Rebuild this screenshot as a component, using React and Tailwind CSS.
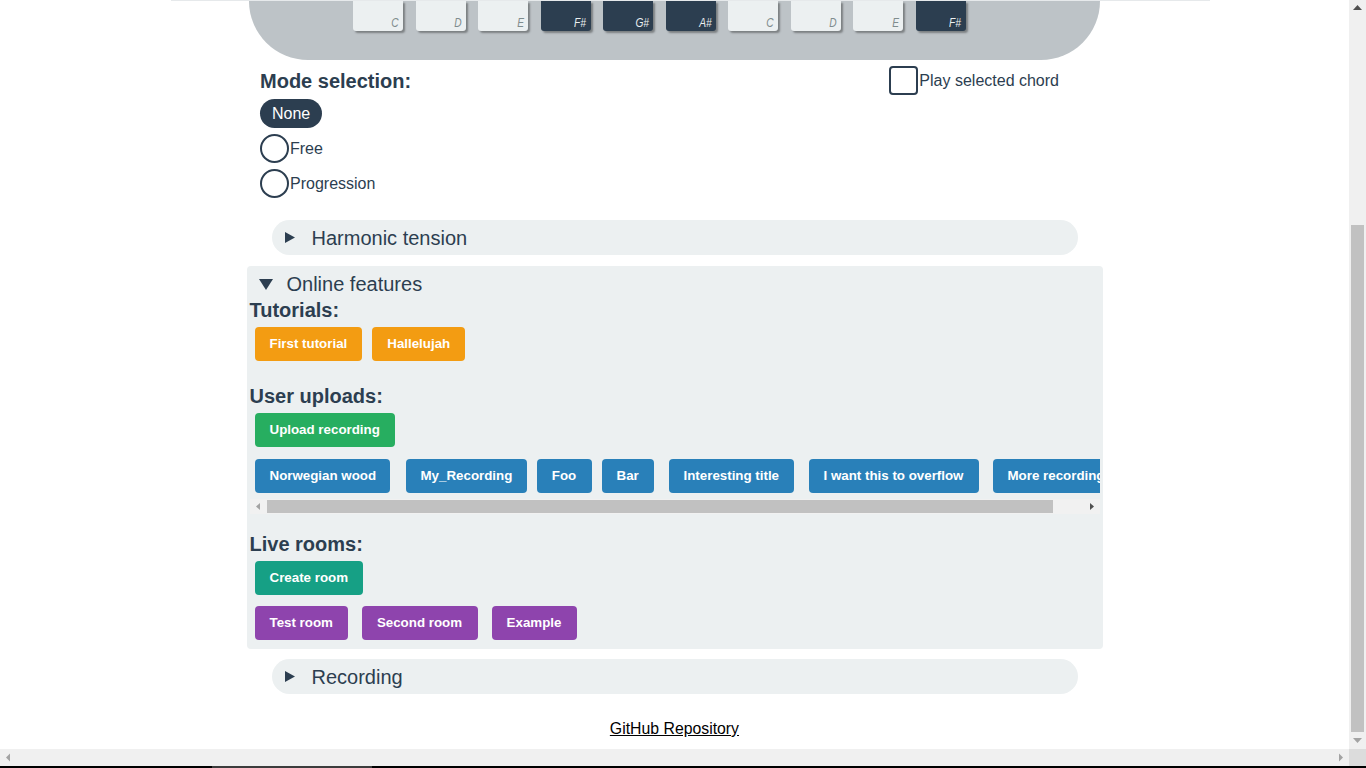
import React from 'react';

const keys = [
  { note: 'C', dark: false },
  { note: 'D', dark: false },
  { note: 'E', dark: false },
  { note: 'F#', dark: true },
  { note: 'G#', dark: true },
  { note: 'A#', dark: true },
  { note: 'C', dark: false },
  { note: 'D', dark: false },
  { note: 'E', dark: false },
  { note: 'F#', dark: true },
];

const uploads = [
  { label: 'Norwegian wood', cls: 'ml-[5px] w-[135px]' },
  { label: 'My_Recording', cls: 'ml-[16px] w-[121px]' },
  { label: 'Foo', cls: 'ml-[10px] w-[55px]' },
  { label: 'Bar', cls: 'ml-[10px] w-[52px]' },
  { label: 'Interesting title', cls: 'ml-[15px] w-[125px]' },
  { label: 'I want this to overflow', cls: 'ml-[15px] w-[170px]' },
  { label: 'More recordings', cls: 'ml-[14px] w-[122px]' },
];

const rooms = [
  { label: 'Test room', cls: 'ml-[5px] w-[93px]' },
  { label: 'Second room', cls: 'ml-[14px] w-[116px]' },
  { label: 'Example', cls: 'ml-[14px] w-[85px]' },
];

const Btn = ({ children, className }) => (
  <button className={`h-[34px] shrink-0 rounded-[4px] px-[15px] text-[13.333px] font-bold whitespace-nowrap text-white ${className}`}>
    {children}
  </button>
);

const Right = () => (
  <svg width="10" height="11" viewBox="0 0 10 11" className="shrink-0">
    <polygon points="0,0 10,5.5 0,11" fill="#2c3e50" />
  </svg>
);

const Down = () => (
  <svg width="14" height="11" viewBox="0 0 14 11" className="shrink-0">
    <polygon points="0,0 14,0 7,11" fill="#2c3e50" />
  </svg>
);

const Summary = ({ label }) => (
  <div className="mx-auto flex h-[35px] w-[806px] items-center rounded-full bg-[#ecf0f1] pl-[13px]">
    <Right />
    <span className="ml-[17px] text-[20px] text-[#2c3e50]">{label}</span>
  </div>
);

const Heading = ({ children, className }) => (
  <h3 className={`ml-[3px] text-[20px] leading-[24px] font-bold text-[#2c3e50] ${className}`}>{children}</h3>
);

export default function App() {
  return (
    <div className="flex h-[768px] w-[1366px] flex-col overflow-hidden bg-white font-['Liberation_Sans',Arial,sans-serif]">
      <div className="flex h-[749px]">
        <div className="flex w-[1349px] flex-col overflow-hidden">
          <div className="ml-[171px] h-px w-[1039px] shrink-0 bg-[#e6e9eb]" />

          {/* piano */}
          <div className="mx-auto h-[59px] w-[851px] shrink-0 rounded-b-[60px] bg-[#bdc3c7] pl-[104px]">
            <div className="flex gap-[12.5px]">
              {keys.map((k, i) => (
                <div
                  key={i}
                  className={`flex h-[30px] w-[50px] items-end justify-end rounded-b-[3px] pr-[4px] pb-[2px] shadow-[2px_2px_2px_rgba(0,0,0,0.35)] ${k.dark ? 'bg-[#2c3e50] text-[#ecf0f1]' : 'bg-[#ecf0f1] text-[#7f8c8d]'}`}
                >
                  <span className="inline-block origin-right scale-x-[0.85] text-[12px] leading-[12px] italic">{k.note}</span>
                </div>
              ))}
            </div>
          </div>

          {/* mode selection */}
          <div className="mx-auto flex w-[851px] shrink-0 items-start justify-between pr-[41px] pl-[11px] text-[#2c3e50]">
            <div className="flex flex-col items-start pt-[9px]">
              <h3 className="text-[20px] leading-[24px] font-bold">Mode selection:</h3>
              <div className="mt-[6px] flex flex-col items-start gap-[6px]">
                <span className="flex h-[29px] items-center rounded-full bg-[#2c3e50] px-[12px] text-[16px] text-white">None</span>
                <label className="flex h-[29px] items-center text-[16px]">
                  <span className="h-[29px] w-[29px] rounded-full border-2 border-[#2c3e50]" />
                  <span className="ml-px">Free</span>
                </label>
                <label className="flex h-[29px] items-center text-[16px]">
                  <span className="h-[29px] w-[29px] rounded-full border-2 border-[#2c3e50]" />
                  <span className="ml-px">Progression</span>
                </label>
              </div>
            </div>
            <label className="mt-[6px] flex h-[29px] items-center text-[16px]">
              <span className="h-[29px] w-[29px] rounded-[4px] border-[2.5px] border-[#2c3e50]" />
              <span className="ml-px">Play selected chord</span>
            </label>
          </div>

          <div className="mt-[22px] shrink-0">
            <Summary label="Harmonic tension" />
          </div>

          {/* online features */}
          <div className="mx-auto mt-[11px] w-[856px] shrink-0 rounded-[4px] bg-[#ecf0f1] pb-[9px]">
            <div className="mt-[6px] flex h-[24px] items-center pl-[12px]">
              <Down />
              <span className="ml-[14px] text-[20px] text-[#2c3e50]">Online features</span>
            </div>

            <Heading className="mt-[2px]">Tutorials:</Heading>
            <div className="mt-[5px] flex">
              <Btn className="ml-[8px] bg-[#f39c12]">First tutorial</Btn>
              <Btn className="ml-[10px] bg-[#f39c12]">Hallelujah</Btn>
            </div>

            <Heading className="mt-[23px]">User uploads:</Heading>
            <div className="mt-[5px] flex">
              <Btn className="ml-[8px] bg-[#27ae60]">Upload recording</Btn>
            </div>

            <div className="mt-[12px] ml-[3px] w-[850px]">
              <div className="flex overflow-hidden">
                {uploads.map((u) => (
                  <Btn key={u.label} className={`bg-[#2980b9] ${u.cls}`}>{u.label}</Btn>
                ))}
              </div>
              <div className="mt-[6px] flex h-[15px] items-center bg-[#f1f1f1]">
                <svg width="17" height="15" viewBox="0 0 17 15" className="shrink-0">
                  <polygon points="6,7.5 10,4 10,11" fill="#a3a3a3" />
                </svg>
                <div className="h-[13px] w-[786px] bg-[#c1c1c1]" />
                <div className="flex-1" />
                <svg width="17" height="15" viewBox="0 0 17 15" className="shrink-0">
                  <polygon points="11,7.5 7,4 7,11" fill="#505050" />
                </svg>
              </div>
            </div>

            <Heading className="mt-[18px]">Live rooms:</Heading>
            <div className="mt-[5px] flex">
              <Btn className="ml-[8px] bg-[#16a085]">Create room</Btn>
            </div>
            <div className="mt-[11px] ml-[3px] flex">
              {rooms.map((r) => (
                <Btn key={r.label} className={`bg-[#8e44ad] ${r.cls}`}>{r.label}</Btn>
              ))}
            </div>
          </div>

          <div className="mt-[10px] shrink-0">
            <Summary label="Recording" />
          </div>

          <div className="mt-[26px] flex shrink-0 justify-center">
            <a href="#" className="inline-block scale-x-[0.93] text-[17px] leading-[18px] text-black underline">
              GitHub Repository
            </a>
          </div>
        </div>

        {/* page vertical scrollbar */}
        <div className="flex w-[17px] flex-col bg-[#f0f0f0]">
          <svg width="17" height="17" viewBox="0 0 17 17" className="shrink-0">
            <polygon points="8.5,5 13,10 4,10" fill="#505050" />
          </svg>
          <div className="h-[208px]" />
          <div className="mx-auto h-[508px] w-[13px] bg-[#c1c1c1]" />
          <div className="flex-1" />
          <svg width="17" height="17" viewBox="0 0 17 17" className="shrink-0">
            <polygon points="8.5,11 13,6 4,6" fill="#a3a3a3" />
          </svg>
        </div>
      </div>

      {/* page horizontal scrollbar */}
      <div className="flex h-[17px] shrink-0">
        <div className="flex w-[1349px] items-center justify-between bg-[#f0f0f0]">
          <svg width="17" height="17" viewBox="0 0 17 17">
            <polygon points="6,8.5 10,4.5 10,12.5" fill="#a3a3a3" />
          </svg>
          <svg width="17" height="17" viewBox="0 0 17 17">
            <polygon points="11,8.5 7,4.5 7,12.5" fill="#a3a3a3" />
          </svg>
        </div>
        <div className="w-[17px] bg-[#dcdcdc]" />
      </div>
      <div className="flex h-[2px] shrink-0 bg-black">
        <div className="ml-[212px] w-[160px] bg-[#3c3c3c]" />
      </div>
    </div>
  );
}
